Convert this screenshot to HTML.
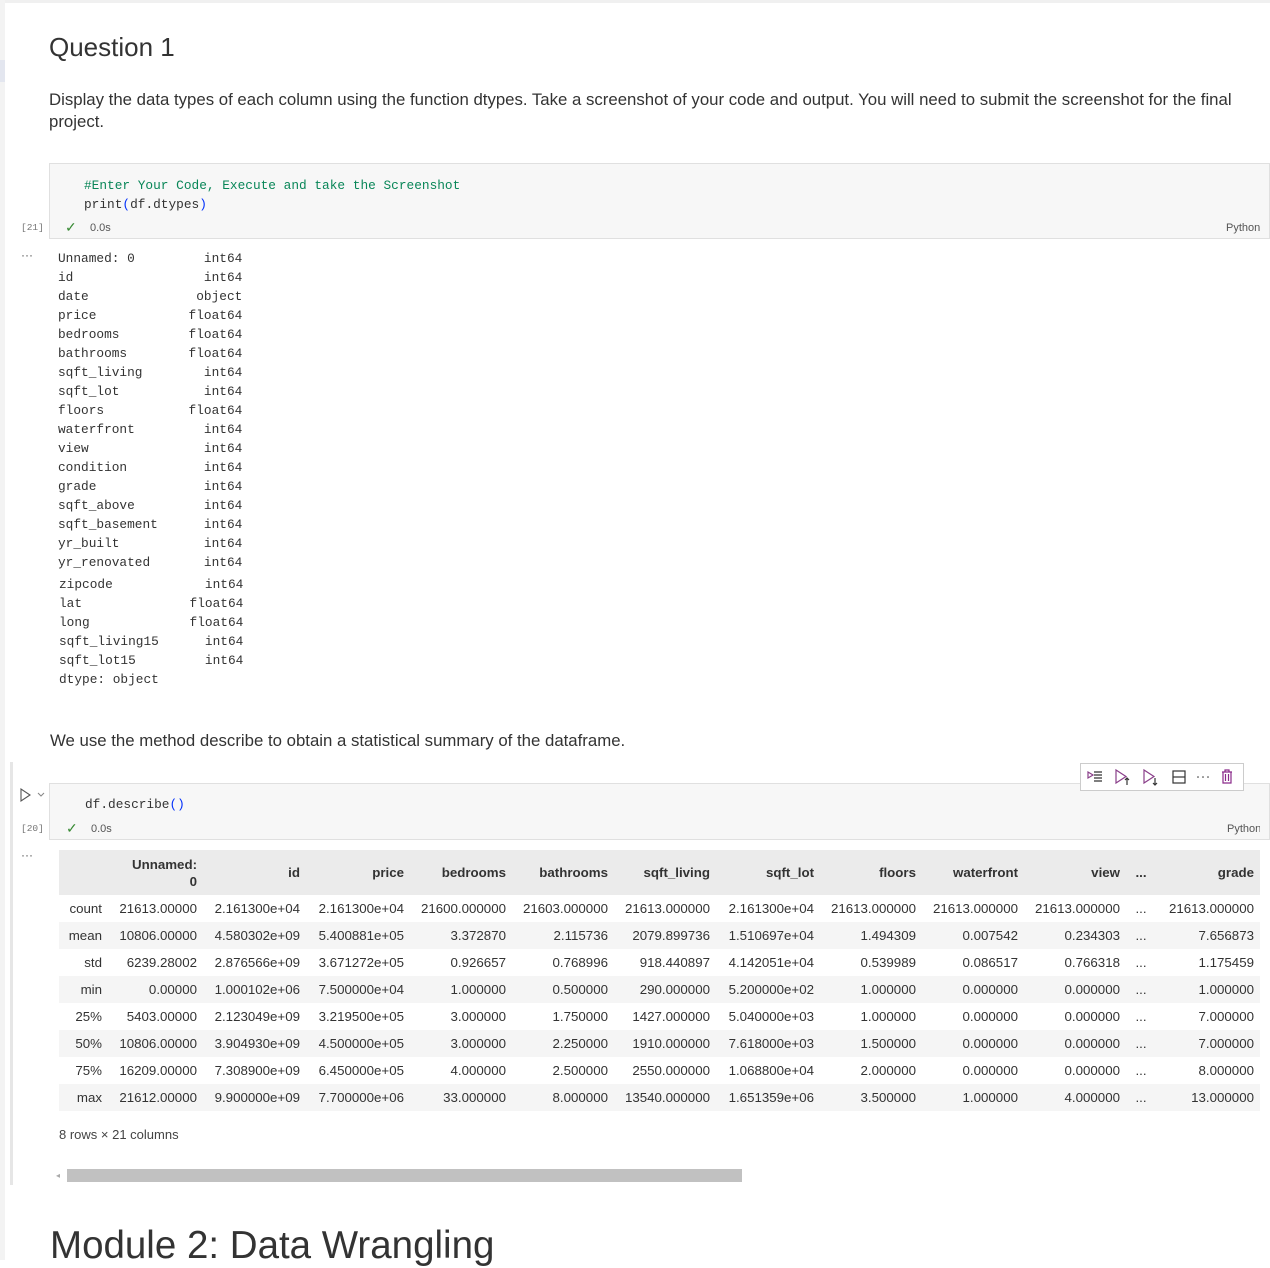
<!DOCTYPE html>
<html><head><meta charset="utf-8"><style>
*{margin:0;padding:0;box-sizing:border-box}
body{width:1270px;height:1260px;background:#fff;position:relative;overflow:hidden;font-family:"Liberation Sans",sans-serif;color:#333}
.a{position:absolute;white-space:pre}
.mono{font-family:"Liberation Mono",monospace;font-size:12.8px;color:#333}
.code{position:absolute;background:#f7f7f7;border:1px solid #e0e0e0}
.small{font-size:11px;color:#555}
table{position:absolute;left:59px;top:850px;border-collapse:collapse;table-layout:fixed;font-size:13.3px;color:#333}
td,th{text-align:right;padding:0 6px 0 0;height:27px;white-space:nowrap}
th{font-weight:bold;background:#ebebeb;height:45px}
tr.g td{background:#f5f5f5}
td.d,th.d{text-align:center;padding:0}
</style></head><body>
<div class="a" style="left:0;top:0;width:1270px;height:3px;background:#f0f0f0"></div>
<div class="a" style="left:0;top:0;width:5px;height:1260px;background:#f3f3f3"></div>
<div class="a" style="left:0;top:60px;width:5px;height:22px;background:#e3e6ef"></div>
<div class="a" style="left:10px;top:762px;width:3px;height:423px;background:#e6e6e6"></div>

<div class="a" style="left:49px;top:32px;font-size:26px;color:#333">Question 1</div>
<div class="a" style="left:49px;top:89px;font-size:16.8px;line-height:22px;width:1215px;white-space:normal;color:#333">Display the data types of each column using the function dtypes. Take a screenshot of your code and output. You will need to submit the screenshot for the final project.</div>

<div class="code" style="left:49px;top:163px;width:1221px;height:76px"></div>
<div class="a mono" style="left:84px;top:178px;color:#098658">#Enter Your Code, Execute and take the Screenshot</div>
<div class="a mono" style="left:84px;top:197px">print<span style="color:#0431fa">(</span>df.dtypes<span style="color:#0431fa">)</span></div>
<div class="a" style="left:21px;top:222px;font-family:'Liberation Mono',monospace;font-size:9.5px;color:#777">[21]</div>
<div class="a" style="left:65px;top:219px;color:#388a34;font-size:14px">✓</div>
<div class="a small" style="left:90px;top:222px">0.0s</div>
<div class="a small" style="left:1226px;top:222px">Python</div>
<div class="a" style="left:21px;top:248px;color:#555;font-size:12px">···</div>

<div class="a mono" style="left:58px;top:249px;line-height:19px">Unnamed: 0         int64
id                 int64
date              object
price            float64
bedrooms         float64
bathrooms        float64
sqft_living        int64
sqft_lot           int64
floors           float64
waterfront         int64
view               int64
condition          int64
grade              int64
sqft_above         int64
sqft_basement      int64
yr_built           int64
yr_renovated       int64</div>
<div class="a mono" style="left:59px;top:575px;line-height:19px">zipcode            int64
lat              float64
long             float64
sqft_living15      int64
sqft_lot15         int64
dtype: object</div>

<div class="a" style="left:50px;top:731px;font-size:16.8px">We use the method describe to obtain a statistical summary of the dataframe.</div>

<div class="code" style="left:49px;top:783px;width:1221px;height:57px"></div>
<div class="a" style="left:1080px;top:763px;width:164px;height:28px;background:#fff;border:1px solid #ccc"></div>
<svg class="a" style="left:1086px;top:767px" width="156" height="20" viewBox="0 0 156 20" fill="none" stroke-width="1.2">
<path d="M2 5l5 3-5 3z" stroke="#8a3f8a"/><path d="M8 5h8M8 8h8M8 11h8M8 14h8" stroke="#333"/>
<path d="M30 3v13l10-6.5z" stroke="#8a3f8a"/><path d="M41 18v-7M39 13l2-2 2 2" stroke="#333"/>
<path d="M58 3v13l10-6.5z" stroke="#8a3f8a"/><path d="M69 11v7M67 16l2 2 2-2" stroke="#333"/>
<rect x="87" y="4" width="12" height="12" stroke="#333"/><path d="M87 10h12" stroke="#333"/>
<circle cx="112" cy="10" r=".8" fill="#333"/><circle cx="117" cy="10" r=".8" fill="#333"/><circle cx="122" cy="10" r=".8" fill="#333"/>
<path d="M136 5h10M139 5V3h4v2M137 5v11h8V5M139.5 7v7M142.5 7v7" stroke="#8a2a8a"/>
</svg>
<svg class="a" style="left:19px;top:787px" width="30" height="16" fill="none" stroke="#555" stroke-width="1.1"><path d="M2 2v12l9-6z"/><path d="M19 6l3 3 3-3" stroke="#888"/></svg>
<div class="a mono" style="left:85px;top:797px">df.describe<span style="color:#0431fa">()</span></div>
<div class="a" style="left:21px;top:823px;font-family:'Liberation Mono',monospace;font-size:9.5px;color:#777">[20]</div>
<div class="a" style="left:66px;top:820px;color:#388a34;font-size:14px">✓</div>
<div class="a small" style="left:91px;top:823px">0.0s</div>
<div class="a small" style="left:1227px;top:823px;width:33px;overflow:hidden">Python</div>
<div class="a" style="left:21px;top:848px;color:#555;font-size:12px">···</div>

<table>
<colgroup><col style="width:49px"><col style="width:95px"><col style="width:103px"><col style="width:104px"><col style="width:102px"><col style="width:102px"><col style="width:102px"><col style="width:104px"><col style="width:102px"><col style="width:102px"><col style="width:102px"><col style="width:30px"><col style="width:104px"></colgroup>
<tr><th></th><th style="line-height:17px">Unnamed:<br>0</th><th>id</th><th>price</th><th>bedrooms</th><th>bathrooms</th><th>sqft_living</th><th>sqft_lot</th><th>floors</th><th>waterfront</th><th>view</th><th class="d">...</th><th>grade</th></tr>
<tr><td>count</td><td>21613.00000</td><td>2.161300e+04</td><td>2.161300e+04</td><td>21600.000000</td><td>21603.000000</td><td>21613.000000</td><td>2.161300e+04</td><td>21613.000000</td><td>21613.000000</td><td>21613.000000</td><td class="d">...</td><td>21613.000000</td></tr>
<tr class="g"><td>mean</td><td>10806.00000</td><td>4.580302e+09</td><td>5.400881e+05</td><td>3.372870</td><td>2.115736</td><td>2079.899736</td><td>1.510697e+04</td><td>1.494309</td><td>0.007542</td><td>0.234303</td><td class="d">...</td><td>7.656873</td></tr>
<tr><td>std</td><td>6239.28002</td><td>2.876566e+09</td><td>3.671272e+05</td><td>0.926657</td><td>0.768996</td><td>918.440897</td><td>4.142051e+04</td><td>0.539989</td><td>0.086517</td><td>0.766318</td><td class="d">...</td><td>1.175459</td></tr>
<tr class="g"><td>min</td><td>0.00000</td><td>1.000102e+06</td><td>7.500000e+04</td><td>1.000000</td><td>0.500000</td><td>290.000000</td><td>5.200000e+02</td><td>1.000000</td><td>0.000000</td><td>0.000000</td><td class="d">...</td><td>1.000000</td></tr>
<tr><td>25%</td><td>5403.00000</td><td>2.123049e+09</td><td>3.219500e+05</td><td>3.000000</td><td>1.750000</td><td>1427.000000</td><td>5.040000e+03</td><td>1.000000</td><td>0.000000</td><td>0.000000</td><td class="d">...</td><td>7.000000</td></tr>
<tr class="g"><td>50%</td><td>10806.00000</td><td>3.904930e+09</td><td>4.500000e+05</td><td>3.000000</td><td>2.250000</td><td>1910.000000</td><td>7.618000e+03</td><td>1.500000</td><td>0.000000</td><td>0.000000</td><td class="d">...</td><td>7.000000</td></tr>
<tr><td>75%</td><td>16209.00000</td><td>7.308900e+09</td><td>6.450000e+05</td><td>4.000000</td><td>2.500000</td><td>2550.000000</td><td>1.068800e+04</td><td>2.000000</td><td>0.000000</td><td>0.000000</td><td class="d">...</td><td>8.000000</td></tr>
<tr class="g"><td>max</td><td>21612.00000</td><td>9.900000e+09</td><td>7.700000e+06</td><td>33.000000</td><td>8.000000</td><td>13540.000000</td><td>1.651359e+06</td><td>3.500000</td><td>1.000000</td><td>4.000000</td><td class="d">...</td><td>13.000000</td></tr>
</table>

<div class="a" style="left:59px;top:1127px;font-size:13px;color:#444">8 rows × 21 columns</div>
<div class="a" style="left:56px;top:1171px;font-size:8px;color:#aaa">◂</div>
<div class="a" style="left:67px;top:1169px;width:675px;height:13px;background:#c1c1c1"></div>
<div class="a" style="left:50px;top:1224px;font-size:38.5px;color:#333">Module 2: Data Wrangling</div>
</body></html>
